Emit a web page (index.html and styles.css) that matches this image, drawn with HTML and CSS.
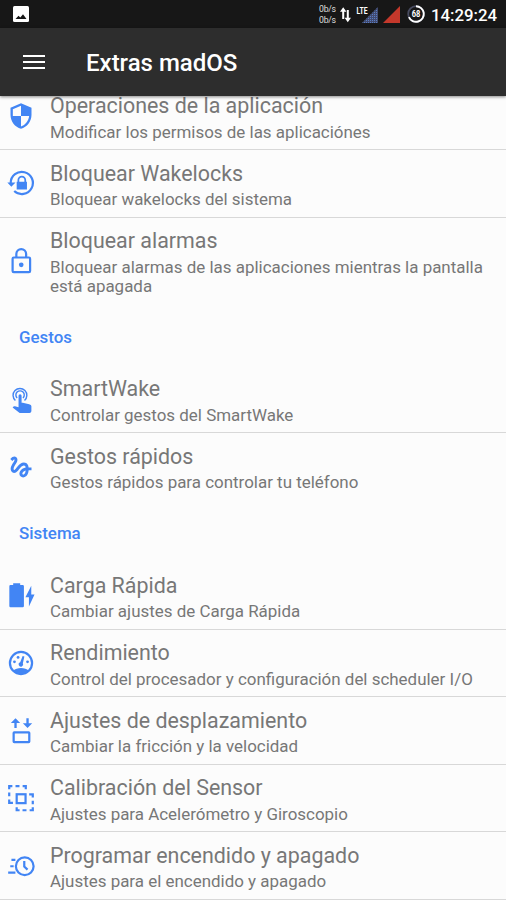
FILE: index.html
```html
<!DOCTYPE html>
<html lang="es">
<head>
<meta charset="utf-8">
<title>Extras madOS</title>
<link rel="stylesheet" href="styles.css">
</head>
<body>
<header class="status">
  <svg class="status-photo" viewBox="0 0 16 16"><rect width="16" height="16" rx="1.5" fill="#fff"/><path d="M2.5 13 5.5 9.800 7.300 11.500 10 8.300 13.500 13Z" fill="#171717"/></svg>
  <div class="net"><span>0b/s</span><span>0b/s</span></div>
  <svg class="arrows" viewBox="0 0 12 18"><path d="M3.500 14V4M8.500 4v10" stroke="#fff" stroke-width="2.200"/><path d="M0 6 3.500 1 7 6ZM5 12.500h7L8.500 17.500Z" fill="#fff"/></svg>
  <svg class="lte" viewBox="0 0 23 20">
    <defs><pattern id="dots" width="2" height="2" patternUnits="userSpaceOnUse"><rect width="2" height="2" fill="#424a70"/><rect width="1" height="1" fill="#587ec2"/></pattern></defs>
    <path d="M6 19 22 3v16Z" fill="url(#dots)"/><text x="0.500" y="9.500" textLength="11" lengthAdjust="spacingAndGlyphs">LTE</text>
  </svg>
  <svg class="signal" viewBox="0 0 17 17"><path d="M0 17 17 0v17Z" fill="#c4382b"/></svg>
  <svg class="battery" viewBox="0 0 18 18"><circle cx="9" cy="9" r="7.800" fill="none" stroke="#484b60" stroke-width="1.800"/><path d="M9 1.200A7.800 7.800 0 1 1 1.900 12.200" fill="none" stroke="#fff" stroke-width="1.900"/><text x="4.700" y="12" textLength="8.600" lengthAdjust="spacingAndGlyphs">68</text></svg>
  <time class="clock">14:29:24</time>
</header>
<div class="toolbar">
  <svg class="menu" viewBox="0 0 22 16"><path d="M0 2h22M0 8h22M0 14h22" stroke="#fff" stroke-width="2.200"/></svg>
  <h1>Extras madOS</h1>
</div>
<main>
  <div class="list">
    <section class="row">
      <svg class="icon" viewBox="0 0 24 24"><path fill-rule="evenodd" d="M12 1 3 5v6c0 5.550 3.840 10.740 9 12 5.160-1.260 9-6.450 9-12V5ZM12 12h7c-.530 4.110-3.280 7.780-7 8.930V12H5V6.300l7-3.110Z"/></svg>
      <div class="copy"><h2>Operaciones de la aplicación</h2><p>Modificar los permisos de las aplicaciónes</p></div>
    </section>
    <section class="row">
      <svg class="icon" viewBox="0 0 24 24"><path class="line" d="M3.200 12A9.500 9.500 0 1 1 6.200 18.900"/><path d="M.3 11.500h7L3.700 15.300ZM9 11V9.500a3.700 3.700 0 0 1 7.400 0V11h.7v6.500H8.300V11ZM10.500 11h4.400V9.500a2.200 2.200 0 0 0-4.400 0Z" fill-rule="evenodd"/></svg>
      <div class="copy"><h2>Bloquear Wakelocks</h2><p>Bloquear wakelocks del sistema</p></div>
    </section>
    <section class="row last">
      <svg class="icon" viewBox="0 0 24 24"><rect class="line" x="4.800" y="9" width="15" height="12.600" rx="1"/><path class="line" d="M8 9V6.100a4.200 4.200 0 0 1 8.400 0V9"/><circle cx="12.200" cy="15.300" r="2"/></svg>
      <div class="copy"><h2>Bloquear alarmas</h2><p>Bloquear alarmas de las aplicaciones mientras la pantalla<br>está apagada</p></div>
    </section>
    <h3>Gestos</h3>
    <section class="row">
      <svg class="icon" viewBox="0 -1.300 24 24"><path class="thin" d="M7.200 12A5.900 5.900 0 1 1 15 12M8.700 9.900a3.600 3.600 0 1 1 5 0"/><path d="M9.900 8a1.300 1.300 0 0 1 2.600 0v6h1l5.500 1.200q1.800.4 1.900 1.600v4.400q-.2 1.500-1.600 1.500H11.500q-.7 0-1.200-.5L4.800 18l.8-.8q.6-.5 1.300-.2l3 .8Z"/></svg>
      <div class="copy"><h2>SmartWake</h2><p>Controlar gestos del SmartWake</p></div>
    </section>
    <section class="row last">
      <svg class="icon" viewBox="0 0 24 24"><path d="M4.590 6.890c.7-.71 1.400-1.350 1.710-1.220.5.200 0 1.030-.3 1.520-.250.420-2.860 3.890-2.860 6.310 0 1.280.480 2.340 1.340 2.980.750.560 1.740.730 2.640.460 1.070-.310 1.950-1.400 3.060-2.770 1.210-1.490 2.830-3.440 4.080-3.440 1.630 0 1.650 1.010 1.760 1.790-3.780.640-5.380 3.670-5.380 5.370s1.440 3.090 3.210 3.090c1.630 0 4.290-1.330 4.690-6.100H21v-2.500h-2.470c-.150-1.650-1.090-4.200-4.030-4.200-2.250 0-4.180 1.910-4.940 2.840-.580.730-2.060 2.480-2.290 2.720-.250.300-.680.840-1.110.840-.450 0-.720-.830-.360-1.920.350-1.090 1.400-2.860 1.850-3.520.780-1.140 1.300-1.920 1.300-3.280C8.950 3.690 7.310 3 6.440 3 5.120 3 3.970 4 3.720 4.250c-.360.360-.660.660-.880.930l1.750 1.710zm9.290 11.660c-.310 0-.740-.260-.740-.720 0-.6.730-2.200 2.870-2.760-.3 2.690-1.430 3.480-2.130 3.480z"/></svg>
      <div class="copy"><h2>Gestos rápidos</h2><p>Gestos rápidos para controlar tu teléfono</p></div>
    </section>
    <h3>Sistema</h3>
    <section class="row">
      <svg class="icon" viewBox="0 0 24 24"><path d="M5.300 2h6v1.500h2.200q1 0 1 1v17q0 1-1 1H3q-1 0-1-1v-17q0-1 1-1h2.300ZM20.800 4v7.500h2.800L18.800 21.800v-7.900h-3Z"/></svg>
      <div class="copy"><h2>Carga Rápida</h2><p>Cambiar ajustes de Carga Rápida</p></div>
    </section>
    <section class="row">
      <svg class="icon" viewBox="0 0 24 24"><circle class="line" cx="12" cy="12" r="9.500"/><path d="M5.500 18.500c2.500-3 10.500-3 13 0-3 4.500-10 4.500-13 0ZM14.900 6.400l-1.300 5.900a1.900 1.900 0 1 1-2.300-.9l2.100-5.500Z"/><circle cx="6.400" cy="11" r="1.200"/><circle cx="9.500" cy="7.200" r="1.200"/><circle cx="17.600" cy="11" r="1.200"/></svg>
      <div class="copy"><h2>Rendimiento</h2><p>Control del procesador y configuración del scheduler I/O</p></div>
    </section>
    <section class="row">
      <svg class="icon" viewBox="0 0 24 24"><rect class="line" x="5.700" y="14" width="13.400" height="8.300" rx=".5"/><path d="M7.300 2 11.300 6H8.300v4.300H6.300V6H3.300ZM16.600 2h2v4.300h3l-4 4-4-4h3Z"/></svg>
      <div class="copy"><h2>Ajustes de desplazamiento</h2><p>Cambiar la fricción y la velocidad</p></div>
    </section>
    <section class="row">
      <svg class="icon" viewBox="0 0 24 24"><rect class="line" x="8.300" y="8.800" width="7.600" height="7.600"/><path class="line" d="M1.900 4.500V1.900h2.700M7.300 1.900h3.400M13.400 1.900h2.700v2.700M1.900 7.200v3.400M1.900 13.200v2.900h3.200M19 8.800h3.100v2.700M22.100 14.300v3M22.100 19.900v2.600h-2.700M16.700 22.500h-3.400M10.800 22.500H8.300v-2.600"/></svg>
      <div class="copy"><h2>Calibración del Sensor</h2><p>Ajustes para Acelerómetro y Giroscopio</p></div>
    </section>
    <section class="row">
      <svg class="icon" viewBox="0 0 24 24"><circle class="line" cx="15.200" cy="12.200" r="7.600"/><path class="line" d="M14.800 7.700v4.800l2.800 2.600M3.800 6.800h3.400M2.800 12.200h2.900M1 17.600h6.200"/></svg>
      <div class="copy"><h2>Programar encendido y apagado</h2><p>Ajustes para el encendido y apagado</p></div>
    </section>
  </div>
</main>
</body>
</html>
```
FILE: styles.css
```css
* { box-sizing: border-box; }
body { margin: 0; height: 900px; overflow: hidden; background: #fcfcfc; color: #777; font-family: Roboto, sans-serif; }
h1, h2, h3, p { margin: 0; }
svg { display: block; flex: none; overflow: visible; }
.status { height: 28px; background: #171717; color: #fff; display: flex; align-items: center; padding: 0 9px 0 13px; }
.status-photo { width: 16px; height: 16px; }
.net { margin-left: auto; display: flex; flex-direction: column; width: 17px; font-size: 8.700px; line-height: 11px; color: #ddd; white-space: nowrap; letter-spacing: -.25px; padding-top: 1px; }
.arrows { width: 11px; height: 17px; margin-left: 4px; }
.lte { width: 23px; height: 20px; margin: 0 0 0 5px; }
.lte text { font-size: 9.500px; font-weight: 700; fill: #fff; }
.signal { width: 17px; height: 17px; margin: 0 0 0 4px; }
.battery { width: 18px; height: 18px; margin-left: 7px; }
.battery text { font-size: 8.500px; font-weight: 700; fill: #fff; }
.clock { margin: 2px 0 0 6px; width: 66px; font-size: 16.800px; font-weight: 500; white-space: nowrap; }
.toolbar { height: 67.500px; background: #2d2d2d; color: #fff; display: flex; align-items: center; padding: 1px 23px 0; position: relative; z-index: 1; box-shadow: 0 1px 3px #0007; }
.menu { width: 22px; height: 16px; }
h1 { margin-left: 41px; padding-top: 1px; font-size: 24px; font-weight: 500; line-height: 30px; }
main { height: 804.500px; overflow: hidden; }
.list { margin-top: -13px; }
.row { display: flex; align-items: center; min-height: 67.600px; padding: 6.600px 0 6.600px 7px; border-bottom: 1.400px solid #d8d8d8; }
.row.last { border-bottom-color: transparent; }
.icon { width: 28px; height: 28px; margin-right: 15px; fill: #4285f4; }
.icon .line, .icon .thin { fill: none; stroke: #4285f4; stroke-width: 1.900; }
.icon .thin { stroke-width: 1.200; }
.copy { padding-top: 3.800px; white-space: nowrap; }
h2 { font-size: 21.420px; font-weight: 400; line-height: 25px; }
p { margin-top: 4.500px; font-size: 16.950px; line-height: 19.800px; }
h3 { height: 61px; padding: 22px 0 0 19px; font-size: 16.900px; font-weight: 500; line-height: 20px; color: #4285f4; }
```
